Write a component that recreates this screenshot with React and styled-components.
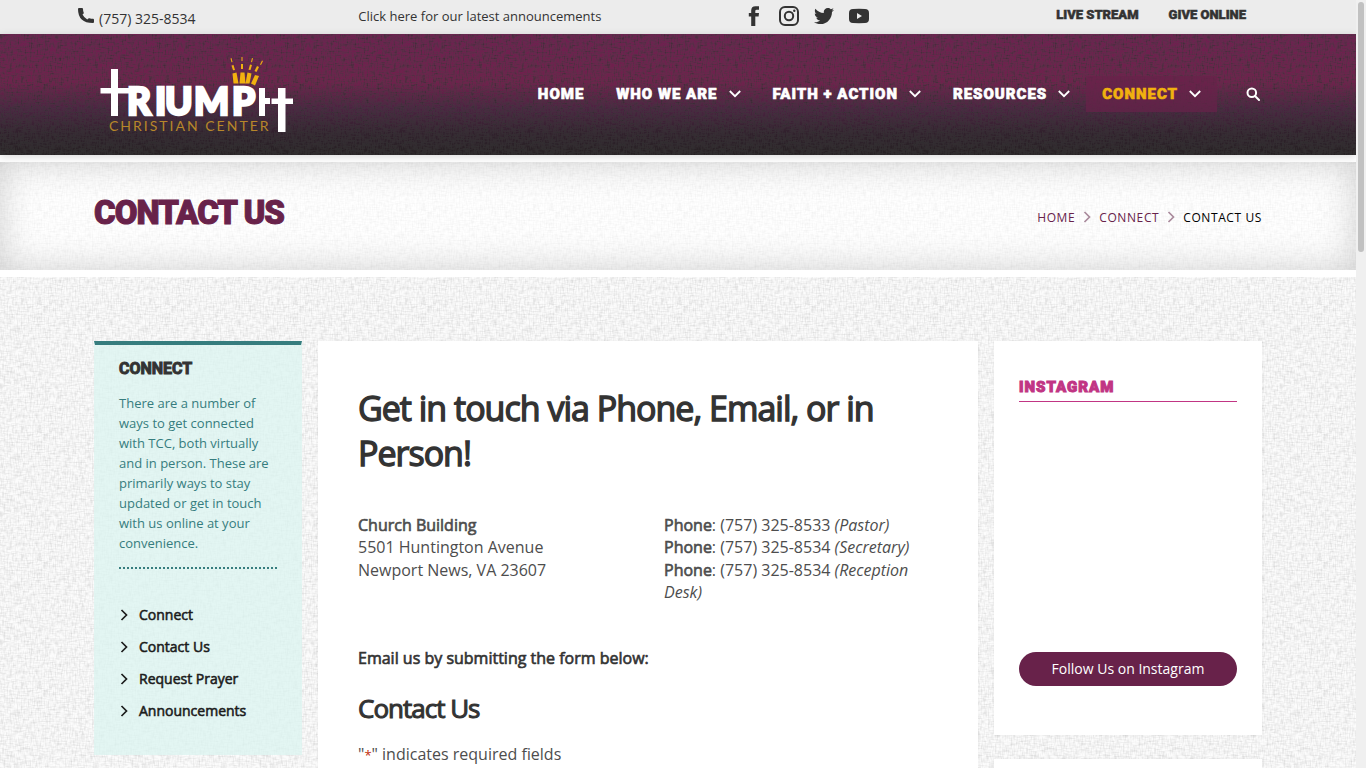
import styled, { createGlobalStyle } from 'styled-components';
import { FaTwitter } from 'react-icons/fa';

// woven linen tile: one noise layer stretched across, one stretched down
const linen = (ink, strength) => {
    const layer = (id, freq, seed) =>
        `<filter id='${id}' x='0' y='0' width='100%' height='100%' color-interpolation-filters='sRGB'>` +
        `<feTurbulence type='fractalNoise' baseFrequency='${freq}' numOctaves='2' seed='${seed}' stitchTiles='stitch'/>` +
        `<feColorMatrix values='0 0 0 0 ${ink} 0 0 0 0 ${ink} 0 0 0 0 ${ink} ${strength} 0 0 0 ${-strength * 0.4}'/>` +
        `</filter><rect width='128' height='128' filter='url(#${id})'/>`;
    const svg =
        `<svg xmlns='http://www.w3.org/2000/svg' width='128' height='128'>` +
        layer('a', '0.14 0.7', 3) + layer('b', '0.7 0.14', 8) + `</svg>`;
    return `url("data:image/svg+xml,${encodeURIComponent(svg)}")`;
};

const lightLinen = linen(0, 0.17);
const softLinen = linen(0, 0.07);
const darkLinen = linen(0, 0.9);
const glowLinen = linen(1, 0.4);

const display = `Roboto, sans-serif`;

const GlobalStyle = createGlobalStyle`
    * {
        box-sizing: border-box;
    }

    body {
        margin: 0;
        font-family: 'Open Sans', 'Noto Sans', sans-serif;
        font-size: 16px;
        color: #4d4d4d;
        background: #fff;
    }

    a {
        color: inherit;
        text-decoration: none;
    }
`;

const Shell = styled.div`
    display: flex;
    height: 100vh;
`;

const Page = styled.div`
    flex: 1;
    min-width: 0;
    overflow-y: auto;
    scrollbar-width: none;
    background: ${lightLinen} #fcfcfc;
`;

const ScrollTrack = styled.div`
    flex: none;
    width: 10px;
    padding: 2px;
    background: #f0f0f0;
`;

const ScrollThumb = styled.div`
    height: 250px;
    border-radius: 3px;
    background: #c1c1c1;
`;

const TopBar = styled.div`
    display: grid;
    grid-template-columns: 24% 33% 1fr;
    height: 34px;
    padding: 0 110px 0 78px;
    background: #ececec;
    color: #333;
`;

const Phone = styled.a`
    display: flex;
    gap: 5px;
    padding-top: 7px;
    font-size: 14px;
    line-height: 24px;
`;

const Announcement = styled.a`
    font-size: 13px;
    line-height: 33px;
`;

const TopRight = styled.div`
    display: flex;
    justify-content: space-between;
`;

const Socials = styled.div`
    display: flex;
    gap: 15px;
    padding-top: 6px;

    svg {
        display: block;
        width: 20px;
        height: 20px;
    }
`;

const TopLinks = styled.div`
    display: flex;
    gap: 30px;
    font: 900 13px/29px ${display};
    -webkit-text-stroke: 0.04em;
`;

const Header = styled.header`
    position: relative;
    display: flex;
    justify-content: space-between;
    height: 121px;
    padding: 0 94px;
    color: #fff;
    background: ${darkLinen}, ${glowLinen},
        linear-gradient(#6e2050 0, #70204c 40%, #4a2340 62%, #30212c 82%, #262123 100%);
    box-shadow: 0 2px 8px rgba(0, 0, 0, 0.15);
`;

const Logo = styled.a`
    padding-top: 20px;

    svg {
        display: block;
    }
`;

const Nav = styled.nav`
    display: flex;
    align-items: center;
    padding-bottom: 2px;
`;

const NavItem = styled.a`
    display: flex;
    align-items: center;
    gap: 11px;
    height: 36px;
    padding: 0 16px;
    font: 900 15px/34px ${display};
    letter-spacing: 1px;
    -webkit-text-stroke: 0.04em;
    color: ${({ $active }) => ($active ? '#f1b10f' : '#fff')};
    background: ${({ $active }) => ($active ? 'rgba(104, 34, 74, 0.7)' : 'none')};

    svg {
        color: #fff;
    }
`;

const SearchButton = styled.button`
    display: flex;
    margin-left: 29px;
    padding: 1px 2px 0 0;
    border: 0;
    background: none;
    color: #fff;
`;

const TitleBand = styled.section`
    display: flex;
    justify-content: space-between;
    align-items: center;
    height: 122px;
    padding: 0 94px;
    border: solid #fff;
    border-width: 7px 0;
    background: ${softLinen} #fff;
    background-clip: padding-box;
    box-shadow: inset 0 0 36px rgba(0, 0, 0, 0.18);
`;

const PageTitle = styled.h1`
    margin: 0;
    padding-bottom: 6px;
    font: 900 33px/40px ${display};
    letter-spacing: -1px;
    -webkit-text-stroke: 1px;
    color: #68224a;
`;

const Crumbs = styled.nav`
    display: flex;
    align-items: center;
    gap: 7px;
    padding-top: 2px;
    font-size: 12px;
    letter-spacing: 0.05em;
    color: #000;

    a {
        color: #68224a;
    }

    svg {
        color: #a98a9c;
    }
`;

const Columns = styled.div`
    display: grid;
    grid-template-columns: 208px 1fr 268px;
    align-items: start;
    gap: 16px;
    padding: 64px 94px;
`;

const SideNav = styled.aside`
    min-height: 414px;
    padding: 13px 24px;
    border: solid transparent;
    border-width: 4px 1px 0;
    border-top-color: #367d7e;
    background: rgba(219, 244, 240, 0.75);
`;

const SideTitle = styled.h2`
    margin: 0;
    font: bold 16px/22px ${display};
    -webkit-text-stroke: 1px;
    color: #333;
`;

const SideText = styled.p`
    margin: 13px 0 0;
    padding-bottom: 14px;
    border-bottom: 2px dotted #367d7e;
    font-size: 13px;
    line-height: 20px;
    color: #367d7e;
`;

const SideList = styled.ul`
    list-style: none;
    margin: 30px 0 0;
    padding: 0;
`;

const SideItem = styled.li`
    a {
        display: flex;
        align-items: center;
        gap: 10px;
        font-size: 14px;
        line-height: 32px;
        color: #1c1c1c;
        -webkit-text-stroke: 0.04em;
    }
`;

const Card = styled.section`
    padding: ${({ $pad }) => $pad};
    background: #fff;
    box-shadow: 0 0 3px rgba(0, 0, 0, 0.06);
`;

const Heading = styled.h2`
    margin: 0 0 38px;
    font-size: 34px;
    font-weight: 400;
    line-height: 45px;
    letter-spacing: -1px;
    -webkit-text-stroke: 0.04em;
    color: #333;
`;

const Contacts = styled.div`
    display: grid;
    grid-template-columns: 1fr 1fr;
    gap: 32px;
    line-height: 1.4;
`;

const Strong = styled.strong`
    font-weight: 400;
    -webkit-text-stroke: 0.04em;
`;

const FormLead = styled.h4`
    margin: 43px 0 0;
    font-size: 16px;
    font-weight: 400;
    line-height: 22px;
    -webkit-text-stroke: 0.04em;
    color: #333;
`;

const FormTitle = styled.h3`
    margin: 22px 0 17px;
    font-size: 26px;
    font-weight: 400;
    line-height: 34px;
    letter-spacing: -1px;
    -webkit-text-stroke: 0.04em;
    color: #333;
`;

const Note = styled.p`
    margin: 0;
    line-height: 24px;

    span {
        font-size: 13px;
        color: #c02b0a;
    }
`;

const Widgets = styled.div`
    display: grid;
    gap: 24px;
`;

const WidgetTitle = styled.h2`
    margin: 0 0 250px;
    padding-bottom: 3px;
    border-bottom: 1px solid #c13584;
    font: 900 15px/22px ${display};
    letter-spacing: 1px;
    -webkit-text-stroke: 1px;
    color: #c13584;
`;

const FollowLink = styled.a`
    display: block;
    border-radius: 17px;
    font-size: 14px;
    line-height: 34px;
    text-align: center;
    color: #fff;
    background: #68224a;
`;

const PhoneIcon = () => (
    <svg width="16" height="17" viewBox="0 0 16 17" fill="currentColor">
        <path d="M0 2Q0 1 1 1H4Q5 1 5 2Q5 4 5.700 5.500Q6 6.200 5.400 6.800L4.500 7.600Q6 10.800 9.300 12.500L10.300 11.500Q10.800 11 11.500 11.200Q13 11.700 15 11.800Q16 11.900 16 13V15Q16 16 15 16Q0 16 0 2Z" />
    </svg>
);

const ChevronDown = () => (
    <svg width="12" height="8" viewBox="0 0 12 8" fill="none" stroke="currentColor" strokeWidth="1.8">
        <path d="M0.8 1l5.2 5.2L11.2 1" />
    </svg>
);

const ChevronRight = () => (
    <svg width="10" height="12" viewBox="0 0 10 12" fill="none" stroke="currentColor" strokeWidth="1.7">
        <path d="M2.5 1l5 5-5 5" />
    </svg>
);

const Facebook = () => (
    <svg viewBox="0 0 20 20" fill="currentColor">
        <path d="M15 0.200V3.800H12.700Q11.300 3.800 11.300 5V7H15L14.600 10.500H11.300V20H7.200V10.500H4.800V7H7.200V4.500Q7.200 0.200 11.500 0.200Z" />
    </svg>
);

const Instagram = () => (
    <svg viewBox="0 0 20 20" fill="none" stroke="currentColor" strokeWidth="2">
        <rect x="1" y="1" width="18" height="18" rx="5" />
        <circle cx="10" cy="10" r="4.2" />
        <circle cx="15.3" cy="4.7" r="1.2" fill="currentColor" stroke="none" />
    </svg>
);

const YouTube = () => (
    <svg viewBox="0 0 20 20" fill="currentColor">
        <path d="M4 3Q10 2.7 16 3Q20 3 20 7V13Q20 17 16 17Q10 17.3 4 17Q0 17 0 13V7Q0 3 4 3ZM8 7v6l5-3z" fillRule="evenodd" />
    </svg>
);

const SearchIcon = () => (
    <svg width="14" height="14" viewBox="0 0 14 14" fill="none" stroke="currentColor" strokeWidth="2">
        <circle cx="5.8" cy="5.8" r="4.3" />
        <path d="M9 9l4 4" strokeLinecap="round" />
    </svg>
);

const TriumphLogo = () => (
    <svg width="206" height="84" viewBox="94 54 206 84" role="img" aria-label="Triumph Christian Center">
        <g fill="#fff">
            <path d="M111 69h7v19h17v5.500h-17v22.500h-7v-22.500h-10.500v-5.500h10.500z" />
            <text
                x="127 155 165 194 232"
                y="115"
                fontFamily="Lato"
                fontWeight="900"
                fontSize="37"
                stroke="#fff"
                strokeWidth="2.6"
            >
                RIUMP
            </text>
            <path d="M259 88h6v10h5v6h-5v12h-6z" />
            <path d="M278 88h7.500v10.500h7.500v5.500h-7.500v28h-7.500v-28h-6.500v-5.500h6.500z" />
        </g>
        <g fill="#f1b10f">
            <path d="M232.500 73.500l4-1 2 11h-5zM240.500 72.500h4l1 11h-6zM247.500 72.500l4 1-2 10h-4zM255 75l4 1-4 9.500-4-2z" />
            <path d="M231.500 65.500l2-.5 1.500 5-2 .3zM241 64h2v5h-2zM250 64.500l2 .5-1.500 5-2-.3zM257 66l2 1-2.500 5-2-1z" />
            <path d="M230.500 58.500l1-.5 1 4-1 .2zM241.500 57h1v4h-1zM252 58l1 .3-1 4-1-.2zM262 60.500l1 .5-2 4-1-.5z" />
        </g>
        <text x="109" y="131" fontFamily="Lato" fontSize="14" letterSpacing="2" fill="#b7872a">CHRISTIAN CENTER</text>
    </svg>
);

const navItems = [
    { label: 'HOME' },
    { label: 'WHO WE ARE', menu: true },
    { label: 'FAITH + ACTION', menu: true },
    { label: 'RESOURCES', menu: true },
    { label: 'CONNECT', menu: true, active: true },
];

const sideLinks = ['Connect', 'Contact Us', 'Request Prayer', 'Announcements'];

const App = () => {
    return (
        <>
            <GlobalStyle />
            <Shell>
                <Page>
                    <TopBar>
                        <Phone href="tel:7573258534">
                            <PhoneIcon />
                            (757) 325-8534
                        </Phone>
                        <Announcement href="#">Click here for our latest announcements</Announcement>
                        <TopRight>
                            <Socials>
                                <a href="#" aria-label="Facebook"><Facebook /></a>
                                <a href="#" aria-label="Instagram"><Instagram /></a>
                                <a href="#" aria-label="Twitter"><FaTwitter /></a>
                                <a href="#" aria-label="YouTube"><YouTube /></a>
                            </Socials>
                            <TopLinks>
                                <a href="#">LIVE STREAM</a>
                                <a href="#">GIVE ONLINE</a>
                            </TopLinks>
                        </TopRight>
                    </TopBar>

                    <Header>
                        <Logo href="#"><TriumphLogo /></Logo>
                        <Nav>
                            {navItems.map((item) => (
                                <NavItem key={item.label} href="#" $active={item.active}>
                                    {item.label}
                                    {item.menu && <ChevronDown />}
                                </NavItem>
                            ))}
                            <SearchButton aria-label="Search"><SearchIcon /></SearchButton>
                        </Nav>
                    </Header>

                    <TitleBand>
                        <PageTitle>CONTACT US</PageTitle>
                        <Crumbs>
                            <a href="#">HOME</a>
                            <ChevronRight />
                            <a href="#">CONNECT</a>
                            <ChevronRight />
                            <span>CONTACT US</span>
                        </Crumbs>
                    </TitleBand>

                    <Columns>
                        <SideNav>
                            <SideTitle>CONNECT</SideTitle>
                            <SideText>
                                There are a number of ways to get connected with TCC, both virtually and in person.
                                These are primarily ways to stay updated or get in touch with us online at your
                                convenience.
                            </SideText>
                            <SideList>
                                {sideLinks.map((label) => (
                                    <SideItem key={label}>
                                        <a href="#"><ChevronRight />{label}</a>
                                    </SideItem>
                                ))}
                            </SideList>
                        </SideNav>

                        <Card $pad="45px 40px">
                            <Heading>Get in touch via Phone, Email, or in Person!</Heading>
                            <Contacts>
                                <div>
                                    <Strong>Church Building</Strong><br />
                                    5501 Huntington Avenue<br />
                                    Newport News, VA 23607
                                </div>
                                <div>
                                    <Strong>Phone</Strong>: (757) 325-8533 <em>(Pastor)</em><br />
                                    <Strong>Phone</Strong>: (757) 325-8534 <em>(Secretary)</em><br />
                                    <Strong>Phone</Strong>: (757) 325-8534 <em>(Reception Desk)</em>
                                </div>
                            </Contacts>
                            <FormLead>Email us by submitting the form below:</FormLead>
                            <FormTitle>Contact Us</FormTitle>
                            <Note>"<span>*</span>" indicates required fields</Note>
                        </Card>

                        <Widgets>
                            <Card $pad="35px 25px 49px">
                                <WidgetTitle>INSTAGRAM</WidgetTitle>
                                <FollowLink href="#">Follow Us on Instagram</FollowLink>
                            </Card>
                            <Card $pad="35px 25px" />
                        </Widgets>
                    </Columns>
                </Page>
                <ScrollTrack>
                    <ScrollThumb />
                </ScrollTrack>
            </Shell>
        </>
    );
};

export default App;
